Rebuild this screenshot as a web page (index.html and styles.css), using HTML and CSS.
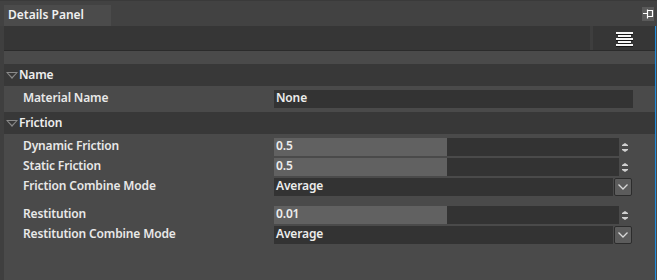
FILE: index.html
```html
<!DOCTYPE html>
<html>
<head>
<meta charset="utf-8">
<link rel="stylesheet" href="styles.css">
</head>
<body>
<div class="window">
  <div class="titlebar">
    <div class="tab">Details Panel</div>
    <div class="pin">
      <svg width="12" height="14" viewBox="0 0 12 14"><path d="M1 6.5H5M5.5 2.5V11.5M5.5 3.5H10.5V9.5H5.5" stroke="#fff" stroke-width="1.2" fill="none"/></svg>
    </div>
  </div>
  <div class="main">
    <div class="gutter"></div>
    <div class="content">
      <div class="toolbar">
        <div class="toolbar-fill"></div>
        <div class="toolbar-btn">
          <svg width="18" height="16" viewBox="0 0 18 16">
            <g fill="#000" opacity="0.6">
              <rect x="0" y="2" width="17" height="2"/><rect x="2" y="5" width="13" height="2"/><rect x="0" y="8" width="17" height="2"/><rect x="2" y="11" width="13" height="2"/><rect x="0" y="14" width="17" height="2"/>
            </g>
            <g fill="#f4f4f4">
              <rect x="0" y="1" width="17" height="2"/><rect x="2" y="4" width="13" height="2"/><rect x="0" y="7" width="17" height="2"/><rect x="2" y="10" width="13" height="2"/><rect x="0" y="13" width="17" height="2"/>
            </g>
          </svg>
        </div>
      </div>
      <div class="props">
        <div class="group-header"><span class="caret"></span>Name</div>
        <div class="row row-name">
          <div class="label">Material Name</div>
          <div class="field text">None</div>
        </div>
        <div class="group-header"><span class="caret"></span>Friction</div>
        <div class="group-body">
          <div class="row">
            <div class="label">Dynamic Friction</div>
            <div class="num-wrap">
              <div class="field num"><div class="fill" style="width:173px"></div><span class="val">0.5</span></div>
              <div class="spin"><span class="up"></span><span class="down"></span></div>
            </div>
          </div>
          <div class="row">
            <div class="label">Static Friction</div>
            <div class="num-wrap">
              <div class="field num"><div class="fill" style="width:173px"></div><span class="val">0.5</span></div>
              <div class="spin"><span class="up"></span><span class="down"></span></div>
            </div>
          </div>
          <div class="row">
            <div class="label">Friction Combine Mode</div>
            <div class="combo-wrap">
              <div class="field combo">Average</div>
              <div class="drop"><svg width="10" height="6" viewBox="0 0 10 6"><path d="M0.5 0.5L5 5L9.5 0.5" stroke="#d8d8d8" stroke-width="1.3" fill="none"/></svg></div>
            </div>
          </div>
          <div class="row spaced">
            <div class="label">Restitution</div>
            <div class="num-wrap">
              <div class="field num"><div class="fill" style="width:173px"></div><span class="val">0.01</span></div>
              <div class="spin"><span class="up"></span><span class="down"></span></div>
            </div>
          </div>
          <div class="row">
            <div class="label">Restitution Combine Mode</div>
            <div class="combo-wrap">
              <div class="field combo">Average</div>
              <div class="drop"><svg width="10" height="6" viewBox="0 0 10 6"><path d="M0.5 0.5L5 5L9.5 0.5" stroke="#d8d8d8" stroke-width="1.3" fill="none"/></svg></div>
            </div>
          </div>
        </div>
      </div>
    </div>
    <div class="edge"></div>
  </div>
</div>
</body>
</html>
```
FILE: styles.css
```css
* { box-sizing: border-box; }
html, body { margin: 0; padding: 0; }
body {
  width: 657px;
  height: 280px;
  overflow: hidden;
  background: #4a4a4a;
  font-family: "Noto Sans", "Open Sans", sans-serif;
  font-size: 12px;
  font-weight: 600;
  letter-spacing: -0.15px;
  color: #e8e8e8;
}
.window {
  display: flex;
  flex-direction: column;
  height: 280px;
}
.titlebar {
  height: 26px;
  background: #424242;
  border-top: 1px solid #3a3a3a;
  display: flex;
  align-items: flex-end;
  justify-content: space-between;
  padding-left: 4px;
  padding-right: 3px;
}
.tab {
  width: 107px;
  height: 21px;
  background: #4b4b4b;
  padding-left: 4px;
  line-height: 19px;
  letter-spacing: 0;
  color: #f0f0f0;
}
.pin {
  align-self: flex-start;
  margin-top: 6px;
  width: 12px;
  height: 14px;
  background: #5a5a5a;
  display: flex;
}
.main {
  flex: 1;
  display: flex;
}
.gutter {
  width: 4px;
  background: #3f3f3f;
}
.content {
  flex: 1;
  display: flex;
  flex-direction: column;
}
.edge {
  width: 2px;
  border-left: 1px solid #1f8fe0;
  background: #4a4a4a;
}
.toolbar {
  height: 25px;
  display: flex;
  background: #363636;
  border-bottom: 1px solid #2b2b2b;
}
.toolbar-fill {
  flex: 1;
  border-right: 3px solid #3e3e3e;
}
.toolbar-btn {
  width: 62px;
  display: flex;
  align-items: center;
  justify-content: center;
  padding-top: 1px;
  padding-left: 1px;
}
.props {
  padding-top: 13px;
}
.group-header {
  height: 22px;
  background: #383838;
  display: flex;
  align-items: center;
  padding-left: 2px;
  padding-bottom: 2px;
  color: #eeeeee;
}
.group-header + .group-body { margin-top: -1px; }
.caret {
  width: 13px;
  height: 10px;
  position: relative;
}
.caret::before {
  content: "";
  position: absolute;
  left: 0;
  top: 3px;
  width: 0;
  height: 0;
  border-left: 6px solid transparent;
  border-right: 6px solid transparent;
  border-top: 7px solid #8a8a8a;
}
.caret::after {
  content: "";
  position: absolute;
  left: 2px;
  top: 4px;
  width: 0;
  height: 0;
  border-left: 4px solid transparent;
  border-right: 4px solid transparent;
  border-top: 4.5px solid #383838;
}
.row {
  display: flex;
  align-items: center;
  height: 20px;
  padding-left: 19px;
}
.row-name {
  height: 26px;
}
.label {
  width: 251px;
  flex: none;
  line-height: 16px;
  padding-bottom: 2px;
}
.field {
  height: 18px;
  background: #333333;
  line-height: 16px;
  padding-left: 2px;
  color: #ececec;
}
.text {
  width: 359px;
}
.group-body {
  padding-top: 4px;
}
.spaced {
  margin-top: 8px;
}
.num-wrap, .combo-wrap {
  display: flex;
  align-items: center;
  width: 359px;
}
.num {
  width: 345px;
  position: relative;
}
.fill {
  position: absolute;
  left: 0;
  top: 0;
  bottom: 0;
  background: #616161;
}
.val {
  position: relative;
}
.spin {
  flex: 1;
  display: flex;
  flex-direction: column;
  align-items: center;
  gap: 3px;
  padding-right: 2px;
}
.spin span {
  display: block;
  position: relative;
}
.up {
  border-left: 3px solid transparent;
  border-right: 3px solid transparent;
  border-bottom: 2px solid #d0d0d0;
  width: 0;
  box-sizing: content-box;
  height: 0;
  margin-bottom: 1px;
}
.up::after, .down::after {
  content: "";
  position: absolute;
  left: -3px;
  width: 6px;
  height: 1px;
  background: #d0d0d0;
}
.up::after { top: 2px; }
.down {
  border-left: 3px solid transparent;
  border-right: 3px solid transparent;
  border-top: 2px solid #d0d0d0;
  width: 0;
  box-sizing: content-box;
  height: 0;
  margin-top: 1px;
}
.down::after { top: -3px; }
.combo {
  width: 339px;
}
.drop {
  margin-left: 1px;
  width: 18px;
  height: 18px;
  background: #5c5c5c;
  border: 1px solid #2c2c2c;
  border-radius: 2px;
  display: flex;
  align-items: center;
  justify-content: center;
}
```
